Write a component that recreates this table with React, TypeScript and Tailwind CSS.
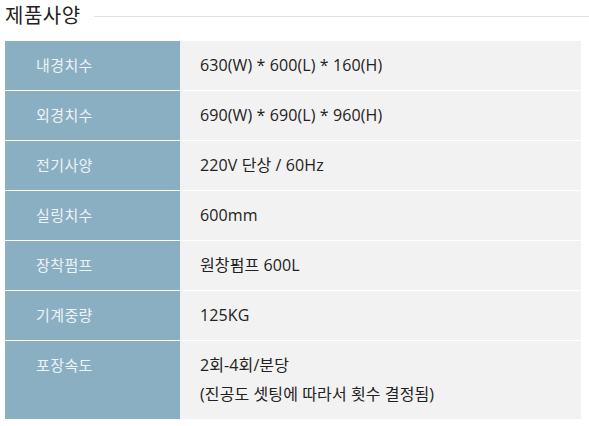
const SPECS: { label: string; value: string[] }[] = [
  { label: "내경치수", value: ["630(W) * 600(L) * 160(H)"] },
  { label: "외경치수", value: ["690(W) * 690(L) * 960(H)"] },
  { label: "전기사양", value: ["220V 단상 / 60Hz"] },
  { label: "실링치수", value: ["600mm"] },
  { label: "장착펌프", value: ["원창펌프 600L"] },
  { label: "기계중량", value: ["125KG"] },
  { label: "포장속도", value: ["2회-4회/분당", "(진공도 셋팅에 따라서 횟수 결정됨)"] },
];

export default function App() {
  return (
    <div
      className="w-[589px] h-[426px] bg-white"
      style={{ fontFamily: '"Open Sans", "Noto Sans CJK KR", sans-serif' }}
    >
      <div className="flex items-center pl-[5px] pt-[2px] h-[30px]">
        <h2 className="text-[20px] leading-[28px] text-[#222] font-normal tracking-[0.5px]">제품사양</h2>
        <div className="flex-1 ml-[13px] h-px bg-[#e0e0e0]" />
      </div>
      <div className="ml-[5px] mt-[11px] w-[576px] flex flex-col gap-px">
        {SPECS.map((row) => (
          <div key={row.label} className="flex">
            <div className="w-[175px] shrink-0 bg-[#8aafc2] pl-[31px] py-[10px] text-[15px] leading-[29px] text-[#eef3f6] tracking-[0.4px]">
              {row.label}
            </div>
            <div className="flex-1 bg-[#f2f2f2] pl-[20px] py-[10px] text-[16px] leading-[29px] text-[#222] tracking-[0.1px]">
              {row.value.map((v) => (
                <div key={v}>{v}</div>
              ))}
            </div>
          </div>
        ))}
      </div>
    </div>
  );
}
